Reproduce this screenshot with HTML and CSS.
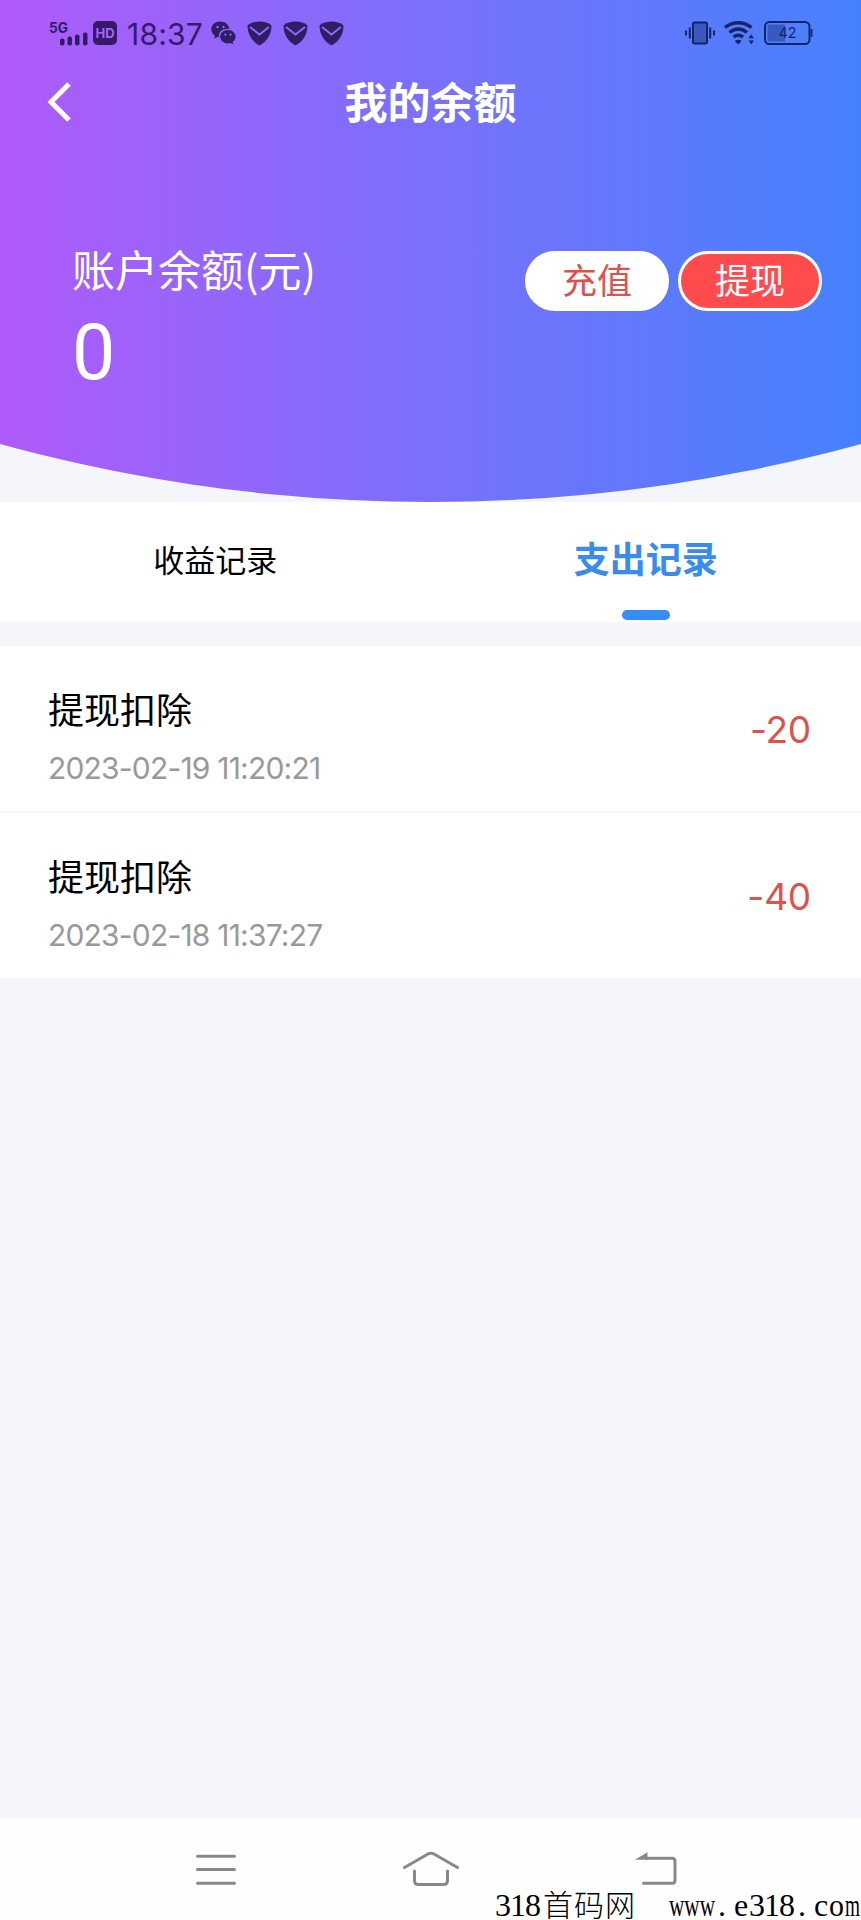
FILE: index.html
```
<!DOCTYPE html>
<html lang="zh-CN">
<head>
    <meta charset="UTF-8">
    <meta name="viewport" content="width=device-width, initial-scale=1.0">
    <title>我的余额</title>
    <link rel="stylesheet" href="styles.css">
</head>
<body>
    <header class="header">
        <div class="status-bar">
            <div class="status-left">
                <svg class="signal" width="40" height="28" viewBox="0 0 40 28">
                    <text x="0" y="13.500" font-size="14.500" font-weight="700" textLength="19" lengthAdjust="spacingAndGlyphs">5G</text>
                    <rect x="11" y="19.500" width="4.500" height="7" rx="2"/>
                    <rect x="18.500" y="17.500" width="4.500" height="9" rx="2"/>
                    <rect x="26" y="15.500" width="4.500" height="11" rx="2"/>
                    <rect x="34" y="13.500" width="4.500" height="13" rx="2"/>
                </svg>
                <span class="hd">HD</span>
                <span class="time">18:37</span>
                <svg class="wechat" width="25" height="25" viewBox="0 0 25 25">
                    <path d="M9.500.5C4.200.5.300 3.900.300 8.300c0 2.700 1.400 4.900 3.600 6.300L3 17.600l3.500-1.700c.5.100 1 .2 1.500.2C6.800 10.800 12 7.200 18.400 7.800 17.500 3.300 13.900.5 9.500.5z"/>
                    <path d="M24.600 15.700c0-3.700-3.500-6.600-7.700-6.600s-7.700 2.900-7.700 6.600 3.500 6.700 7.700 6.700c.9 0 1.800-.1 2.600-.4l2.900 1.600-.8-2.600c1.800-1.200 3-3.100 3-5.300z"/>
                    <g class="eyes">
                        <circle cx="6.500" cy="6" r="1.200"/>
                        <circle cx="12.500" cy="6" r="1.200"/>
                        <circle cx="14.300" cy="13.700" r="1.100"/>
                        <circle cx="19.500" cy="13.700" r="1.100"/>
                    </g>
                </svg>
                <svg class="shield" width="25" height="25" viewBox="0 0 25 25">
                    <path d="M.5 4.500C3.500 1.500 8 .5 12.500.5s9 1 12 4C24.500 13 20 20.500 12.500 24.500 5 20.500.5 13 .5 4.500z"/>
                    <path class="fold" d="M3 6l9.500 7.500L22 6"/>
                </svg>
                <svg class="shield" width="25" height="25" viewBox="0 0 25 25">
                    <path d="M.5 4.500C3.500 1.500 8 .5 12.500.5s9 1 12 4C24.500 13 20 20.500 12.500 24.500 5 20.500.5 13 .5 4.500z"/>
                    <path class="fold" d="M3 6l9.500 7.500L22 6"/>
                </svg>
                <svg class="shield" width="25" height="25" viewBox="0 0 25 25">
                    <path d="M.5 4.500C3.500 1.500 8 .5 12.500.5s9 1 12 4C24.500 13 20 20.500 12.500 24.500 5 20.500.5 13 .5 4.500z"/>
                    <path class="fold" d="M3 6l9.500 7.500L22 6"/>
                </svg>
            </div>
            <div class="status-right">
                <svg width="30" height="24" viewBox="0 0 30 24">
                    <rect x="8" y="1.500" width="14" height="21" rx="1.500" fill-opacity="0.4" stroke="#142465" stroke-width="2"/>
                    <path d="M1 9.500v5M4.800 6.500v11M25.200 6.500v11M29 9.500v5" fill="none" stroke="#142465" stroke-width="2"/>
                </svg>
                <svg class="wifi" width="31" height="24" viewBox="0 0 31 24">
                    <path d="M1 6.500c8-6.400 18.500-6.400 26.500 0M5.500 11.500c5.500-4.300 12-4.300 17.500 0M9.500 16.200c3-2.400 6.500-2.400 9.500 0" fill="none" stroke="#142465" stroke-width="3.400"/>
                    <path d="M10.800 20c2-1.700 4.800-1.700 6.800 0l-3.400 3.500zM24.500 17.300l2.700-4 2.700 4zM24.500 19.500l2.700 4 2.700-4z"/>
                </svg>
                <svg class="battery" width="49" height="24" viewBox="0 0 49 24">
                    <rect x="1" y="1" width="44.500" height="22" rx="4.500" fill="none" stroke="#142465" stroke-width="2"/>
                    <path d="M6 3.500h15v17H6a2.500 2.500 0 0 1-2.500-2.500V6A2.500 2.500 0 0 1 6 3.500z" fill-opacity="0.4"/>
                    <path d="M47.600 8v8" stroke="#142465" stroke-width="1.600"/>
                    <text x="14.500" y="17.300" font-size="15" textLength="18" lengthAdjust="spacingAndGlyphs">42</text>
                </svg>
            </div>
        </div>

        <div class="nav-bar">
            <svg class="back" width="24" height="40" viewBox="0 0 24 40">
                <path d="M22 2L4 20l18 18"/>
            </svg>
            <h1>我的余额</h1>
        </div>

        <div class="balance">
            <div class="balance-info">
                <div class="label">账户余额(元)</div>
                <div class="amount">0</div>
            </div>
            <div class="actions">
                <button class="btn">充值</button>
                <button class="btn withdraw">提现</button>
            </div>
        </div>
    </header>

    <div class="tabs">
        <div class="tab">收益记录</div>
        <div class="tab active">支出记录</div>
    </div>

    <ul class="records">
        <li class="record">
            <div class="info">
                <div class="name">提现扣除</div>
                <div class="date">2023-02-19 11:20:21</div>
            </div>
            <div class="money">-20</div>
        </li>
        <li class="record">
            <div class="info">
                <div class="name">提现扣除</div>
                <div class="date">2023-02-18 11:37:27</div>
            </div>
            <div class="money">-40</div>
        </li>
    </ul>

    <footer class="system-nav">
        <svg width="56" height="36" viewBox="0 0 56 36">
            <path d="M9.500 5.300h37M9.500 18.500h37M9.500 32.300h37"/>
        </svg>
        <svg width="56" height="36" viewBox="0 0 56 36">
            <path d="M1.500 16.500L25 3q3-1.600 6 0l23.500 13.500M11.500 20v9.500q0 4 4 4h25q4 0 4-4V20"/>
        </svg>
        <svg width="56" height="36" viewBox="0 0 56 36">
            <path d="M25 7.300h26q3 0 3 3v19q0 3-3 3H22.500"/>
            <path class="tip" d="M14 8.800L26.500 1.300v7.500z"/>
        </svg>
    </footer>

    <svg class="watermark" width="368" height="38" viewBox="0 0 368 38">
        <text x="2" y="34" textLength="46" lengthAdjust="spacing">318</text>
        <text class="cn" x="50" y="33.500" textLength="92" lengthAdjust="spacing">首码网</text>
        <text x="176" y="34" textLength="46" lengthAdjust="spacingAndGlyphs">www</text>
        <text x="225" y="34">.</text>
        <text x="241" y="34">e</text>
        <text x="256" y="34" textLength="46" lengthAdjust="spacing">318</text>
        <text x="305" y="34">.</text>
        <text x="321" y="34">c</text>
        <text x="336" y="34" textLength="15" lengthAdjust="spacingAndGlyphs">o</text>
        <text x="352" y="34" textLength="15" lengthAdjust="spacingAndGlyphs">m</text>
    </svg>
</body>
</html>
```
FILE: styles.css
```
* {
    box-sizing: border-box;
}

body {
    margin: 0;
    min-height: 1920px;
    display: flex;
    flex-direction: column;
    position: relative;
    background-color: #f4f6fc;
    font-family: Inter, "Noto Sans CJK SC", sans-serif;
    color: #000;
}

/* Header */
.header {
    height: 502px;
    background: linear-gradient(90deg, #b05af9, #7a70fb 50%, #4581fe);
    clip-path: circle(1627px at 50% -1125px);
    color: #fff;
}

.status-bar {
    height: 66px;
    padding: 0 48px 0 49px;
    display: flex;
    justify-content: space-between;
    align-items: center;
}

.status-left,
.status-right {
    display: flex;
    align-items: center;
}

.status-left {
    color: #35196b;
    fill: #2f1d66;
}

.status-right {
    gap: 9px;
    fill: #142465;
}

.signal {
    margin-right: 4px;
}

.hd {
    width: 24px;
    height: 24px;
    border-radius: 5px;
    background-color: #35196b;
    color: #a467f6;
    font-size: 13px;
    font-weight: 700;
    line-height: 24px;
    text-align: center;
}

.time {
    width: 84px;
    margin: 1px 0 0 10px;
    font-size: 30px;
    letter-spacing: 0.2px;
    line-height: 36px;
}

.eyes {
    fill: #9466fa;
}

.shield {
    margin-left: 11px;
}

.fold {
    fill: none;
    stroke: #8d68fb;
    stroke-width: 2;
}

.nav-bar {
    height: 72px;
    padding: 0 47px;
    display: grid;
    grid-template-columns: 24px 1fr 24px;
    align-items: center;
}

.back path {
    fill: none;
    stroke: #fff;
    stroke-width: 5;
}

h1 {
    margin: 1px 0 0;
    font-size: 43px;
    line-height: 60px;
    text-align: center;
}

.balance {
    padding: 99px 39px 0 72px;
    display: flex;
    justify-content: space-between;
    align-items: flex-start;
}

.label {
    font-family: "Noto Sans CJK SC", sans-serif;
    font-size: 43px;
    line-height: 62px;
}

.amount {
    margin-top: 6px;
    font-family: Roboto, sans-serif;
    font-size: 77px;
    line-height: 96px;
}

.actions {
    display: flex;
    gap: 9px;
    margin-top: 14px;
}

.btn {
    width: 144px;
    height: 60px;
    padding: 0;
    border: 3px solid #fff;
    border-radius: 30px;
    background-color: #fff;
    color: #dd524d;
    font-family: inherit;
    font-size: 35px;
    line-height: 54px;
}

.withdraw {
    background-color: #ff4a4e;
    color: #fff;
}

/* Tabs */
.tabs {
    height: 120px;
    display: flex;
    background-color: #fff;
}

.tab {
    flex: 1;
    font-size: 31px;
    line-height: 117px;
    text-align: center;
}

.active {
    position: relative;
    color: #378ced;
    font-size: 36px;
    font-weight: 700;
}

.active::after {
    content: "";
    position: absolute;
    left: 50%;
    bottom: 2px;
    width: 48px;
    height: 10px;
    margin-left: -24px;
    border-radius: 5px;
    background-color: #378cf5;
}

/* Records */
.records {
    margin: 24px 0 0;
    padding: 0;
    list-style: none;
    background-color: #fff;
}

.record {
    height: 165px;
    padding: 0 50px 0 48px;
    display: flex;
    justify-content: space-between;
    align-items: center;
}

.record + .record {
    height: 167px;
    border-top: 2px solid #f8f8fa;
}

.info {
    padding-top: 19px;
}

.name {
    font-size: 36px;
    line-height: 60px;
}

.date {
    color: #999;
    font-size: 30px;
    letter-spacing: -0.8px;
    line-height: 54px;
}

.money {
    margin-top: 1px;
    color: #dd524d;
    font-size: 37px;
    letter-spacing: -0.2px;
}

/* System navigation */
.system-nav {
    height: 101px;
    margin-top: auto;
    padding: 32px 184px 0 188px;
    display: flex;
    justify-content: space-between;
    background-color: #fefefe;
}

.system-nav svg:nth-child(2) {
    margin-left: -4px;
}

.system-nav path {
    fill: none;
    stroke: #888;
    stroke-width: 3;
    stroke-linecap: round;
    stroke-linejoin: round;
}

.system-nav .tip {
    fill: #888;
    stroke: none;
}

.watermark {
    position: absolute;
    right: 0;
    bottom: 0;
    overflow: visible;
    font-family: "Liberation Serif", "Noto Sans CJK SC", serif;
    font-size: 32px;
}

.cn {
    font-size: 30px;
    font-weight: 300;
}
```
